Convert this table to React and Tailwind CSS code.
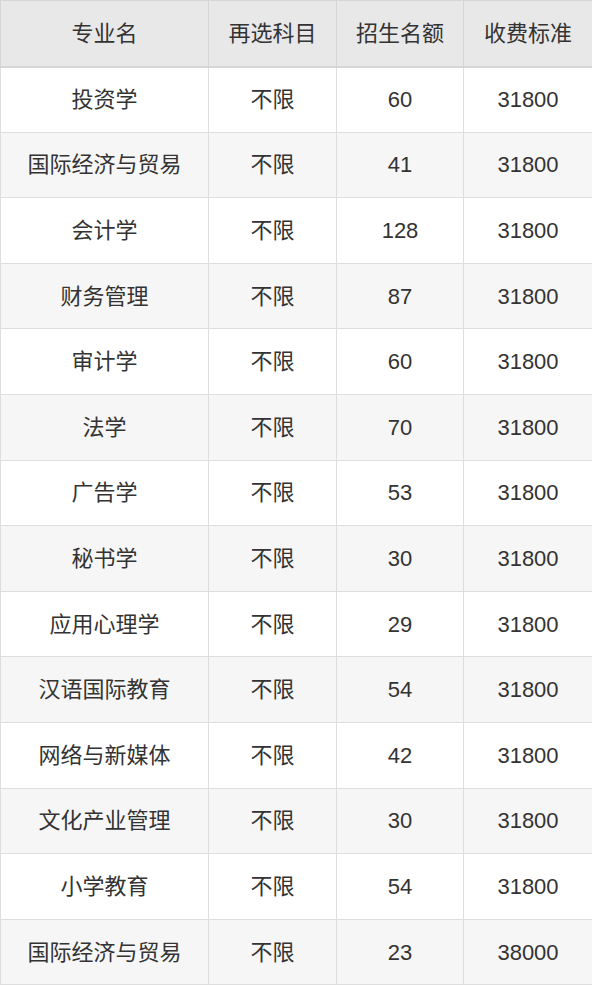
const rows = [
  ["投资学", "不限", "60", "31800"],
  ["国际经济与贸易", "不限", "41", "31800"],
  ["会计学", "不限", "128", "31800"],
  ["财务管理", "不限", "87", "31800"],
  ["审计学", "不限", "60", "31800"],
  ["法学", "不限", "70", "31800"],
  ["广告学", "不限", "53", "31800"],
  ["秘书学", "不限", "30", "31800"],
  ["应用心理学", "不限", "29", "31800"],
  ["汉语国际教育", "不限", "54", "31800"],
  ["网络与新媒体", "不限", "42", "31800"],
  ["文化产业管理", "不限", "30", "31800"],
  ["小学教育", "不限", "54", "31800"],
  ["国际经济与贸易", "不限", "23", "38000"],
];

const headers = ["专业名", "再选科目", "招生名额", "收费标准"];
const widths = ["w-[208px]", "w-[128px]", "w-[127px]", "w-[129px]"];

export default function App() {
  return (
    <div
      className="w-[592px] bg-white text-[#333] text-[22px]"
      style={{ fontFamily: '"Liberation Sans", "Noto Sans CJK SC", sans-serif' }}
    >
      <table className="w-full border-collapse table-fixed">
        <thead>
          <tr className="h-[66px] bg-[#e8e8e8]">
            {headers.map((h, i) => (
              <th
                key={h}
                className={`${widths[i]} border border-[#d6d6d6] border-b-2 font-normal text-center`}
              >
                {h}
              </th>
            ))}
          </tr>
        </thead>
        <tbody>
          {rows.map((r, idx) => (
            <tr
              key={idx}
              className={`h-[65.6px] ${idx % 2 === 1 ? "bg-[#f6f6f6]" : "bg-white"}`}
            >
              {r.map((c, i) => (
                <td key={i} className="border border-[#dedede] text-center">
                  {c}
                </td>
              ))}
            </tr>
          ))}
        </tbody>
      </table>
    </div>
  );
}
